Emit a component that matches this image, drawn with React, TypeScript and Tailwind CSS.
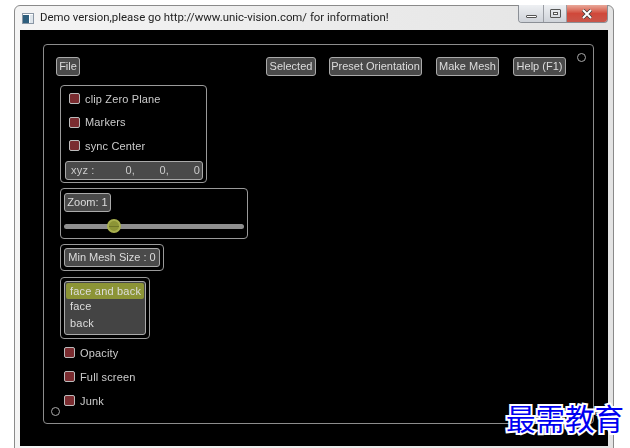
function Btn({ label, className = "" }: { label: string; className?: string }) {
  return (
    <div
      className={
        "flex h-[19px] items-center justify-center whitespace-nowrap rounded-[3px] border border-[#aaa] bg-[#4a4a4a] text-[11px] text-[#ddd] " +
        className
      }
    >
      {label}
    </div>
  );
}

function Check({ label, className = "" }: { label: string; className?: string }) {
  return (
    <div className={"flex h-[23.5px] items-center gap-[5px] " + className}>
      <span className="h-[11px] w-[11px] rounded-[2px] border border-[#bbb] bg-[#7a2c30]" />
      <span className="text-[11px] tracking-[0.15px] text-[#ccc]">{label}</span>
    </div>
  );
}

export default function App() {
  return (
    <div className="relative h-[448px] w-[630px] overflow-hidden bg-white font-['Liberation_Sans',sans-serif]">
      {/* window */}
      <div className="ml-[14px] mt-[5px] h-[445px] w-[600px] rounded-t-[6px] border border-[#8a8a8a] bg-gradient-to-r from-[#f4f4f4] via-[#ececec] to-[#e4e4e4] blur-[0.35px]">
        {/* title bar */}
        <div className="flex h-[24px] items-start">
          <svg width="12" height="11" viewBox="0 0 12 11" className="ml-[7px] mt-[7px]">
            <rect x="0.5" y="0.5" width="11" height="10" fill="#fff" stroke="#8a97a5" />
            <rect x="1" y="2" width="6" height="8" fill="#2f5f7d" />
            <rect x="8" y="2" width="3" height="8" fill="#dfe6ec" />
          </svg>
          <span className="ml-[6px] mt-[3px] font-['Roboto',sans-serif] text-[11.4px] leading-[16px] text-[#222]">
            Demo version,please go http://www.unic-vision.com/ for information!
          </span>
          {/* window controls */}
          <div className="ml-auto mr-[5px] flex h-[18px] w-[90px] -translate-y-px overflow-hidden rounded-b-[4px] border border-t-0 border-[#8b8f96]">
            <div className="flex w-[25px] items-end justify-center border-r border-[#9a9da3] bg-gradient-to-b from-[#eef0f3] to-[#cfd3d9] pb-[4px]">
              <span className="h-[3px] w-[11px] rounded-[1px] border border-[#555] bg-white" />
            </div>
            <div className="flex w-[23px] items-center justify-center border-r border-[#9a9da3] bg-gradient-to-b from-[#eef0f3] to-[#cfd3d9]">
              <span className="flex h-[9px] w-[11px] items-center justify-center rounded-[1px] border border-[#555]">
                <span className="h-[3px] w-[5px] border border-[#555] bg-white" />
              </span>
            </div>
            <div className="flex flex-1 items-center justify-center bg-gradient-to-b from-[#e8a89a] via-[#d0483a] to-[#c9564a]">
              <svg width="12" height="10" viewBox="0 0 12 10">
                <path d="M2 1 L10 9 M10 1 L2 9" stroke="#3a3a3a" strokeWidth="3.4" />
                <path d="M2 1 L10 9 M10 1 L2 9" stroke="#fff" strokeWidth="2" />
              </svg>
            </div>
          </div>
        </div>

        {/* client area */}
        <div className="mx-[5px] h-[416px] bg-black pl-[23px] pr-[14px] pt-[14px]">
          <div className="relative h-[380px] rounded-[4px] border border-[#8c8c8c] pl-[12px] pt-[12px]">
            <span className="absolute right-[7px] top-[8px] h-[9px] w-[9px] rounded-full border border-[#aaa]" />
            <span className="absolute bottom-[7px] left-[7px] h-[9px] w-[9px] rounded-full border border-[#aaa]" />

            {/* toolbar */}
            <div className="flex">
              <Btn label="File" className="w-[24px]" />
              <Btn label="Selected" className="ml-[186px] w-[50px]" />
              <Btn label="Preset Orientation" className="ml-[13px] w-[93px]" />
              <Btn label="Make Mesh" className="ml-[14px] w-[63px]" />
              <Btn label="Help (F1)" className="ml-[14px] w-[53px]" />
            </div>

            <div className="flex flex-col items-start pl-[4px]">
              {/* clip group */}
              <div className="mt-[9px] h-[98px] w-[147px] rounded-[4px] border border-[#9a9a9a] pl-[4px] pt-[1px]">
                <Check label="clip Zero Plane" className="ml-[4px]" />
                <Check label="Markers" className="ml-[4px]" />
                <Check label="sync Center" className="ml-[4px]" />
                <div className="mt-[3px] flex h-[19px] w-[138px] items-center rounded-[3px] border border-[#aaa] bg-[#4a4a4a] pl-[5px] pr-[2px] text-[11px] tracking-[0.2px] text-[#ccc]">
                  <span className="w-[44px]">xyz :</span>
                  <span className="w-[20px] text-right">0,</span>
                  <span className="w-[34px] text-right">0,</span>
                  <span className="w-[31px] text-right">0</span>
                </div>
              </div>

              {/* zoom group */}
              <div className="mt-[5px] h-[51px] w-[188px] rounded-[4px] border border-[#9a9a9a] pl-[3px] pt-[4px]">
                <Btn label="Zoom: 1" className="w-[47px]" />
                <div className="relative mt-[12px] h-[5px] w-[180px] rounded-full bg-[#8f8f8f]">
                  <span className="absolute left-[43px] top-[-5px] flex h-[14px] w-[14px] items-center rounded-full border-2 border-[#a9b04e] bg-[#8c9436]">
                    <span className="h-[1px] w-full bg-[#6f7628]" />
                  </span>
                </div>
              </div>

              {/* mesh size group */}
              <div className="mt-[5px] h-[27px] w-[104px] rounded-[4px] border border-[#9a9a9a] pl-[3px] pt-[3px]">
                <Btn label="Min Mesh Size : 0" className="w-[96px]" />
              </div>

              {/* face mode group */}
              <div className="mt-[6px] h-[62px] w-[90px] rounded-[4px] border border-[#9a9a9a] pl-[3px] pt-[3px]">
                <div className="h-[54px] w-[82px] rounded-[3px] border border-[#aaa] bg-[#444] p-[1px] text-[11px] tracking-[0.2px] text-[#ddd]">
                  <div className="flex h-[16px] items-center rounded-[2px] bg-[#8c9436] pl-[4px]">face and back</div>
                  <div className="flex h-[15px] items-center pl-[4px]">face</div>
                  <div className="flex h-[18px] items-center pl-[4px]">back</div>
                </div>
              </div>

              {/* bottom toggles */}
              <Check label="Opacity" className="ml-[4px] mt-[2px]" />
              <Check label="Full screen" className="ml-[4px] mt-[0.5px]" />
              <Check label="Junk" className="ml-[4px] mt-[0.5px]" />
            </div>
          </div>
        </div>
      </div>

      {/* watermark */}
      <div className="absolute left-[506px] top-[401px] font-['Noto_Sans_CJK_SC',sans-serif] text-[29.5px] font-normal leading-[32px] text-[#0000f0] [paint-order:stroke_fill] [-webkit-text-stroke:4px_#fff]">
        最需教育
      </div>
    </div>
  );
}
